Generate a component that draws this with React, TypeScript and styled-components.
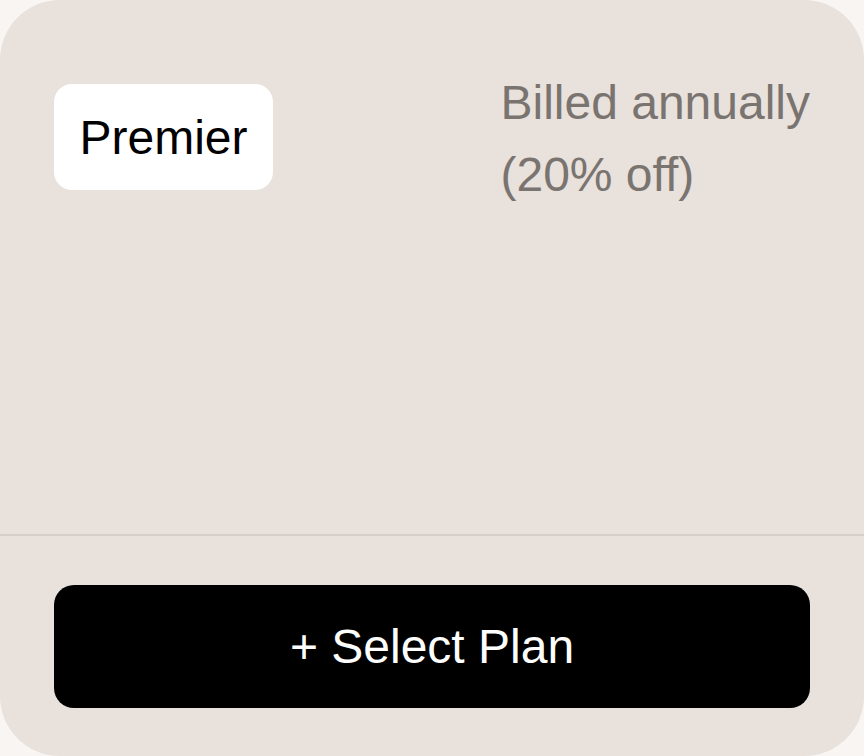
import React from 'react';
import styled, { createGlobalStyle } from 'styled-components';

const GlobalStyle = createGlobalStyle`
  html, body {
    margin: 0;
    padding: 0;
    background: #f8f5f2;
  }
  body {
    font-family: 'Liberation Sans', Arial, sans-serif;
  }
`;

const Card = styled.section`
  display: flex;
  flex-direction: column;
  width: 864px;
  height: 756px;
  box-sizing: border-box;
  background: #e8e1dc;
  border-radius: 60px;
  overflow: hidden;
`;

const Header = styled.header`
  flex: 1;
  display: flex;
  justify-content: space-between;
  align-items: flex-start;
  padding: 84px 54px 0;
`;

const PlanBadge = styled.div`
  display: flex;
  align-items: center;
  justify-content: center;
  width: 219px;
  height: 106px;
  background: #ffffff;
  border-radius: 18px;
  color: #000;
  font-size: 48px;
`;

const Billing = styled.div`
  margin-top: -17px;
  color: #7a7470;
  font-size: 48px;
  line-height: 72px;
`;

const Footer = styled.footer`
  border-top: 2px solid #d6cfca;
  padding: 49px 54px 48px;
`;

const SelectButton = styled.button`
  display: flex;
  align-items: center;
  justify-content: center;
  width: 100%;
  height: 123px;
  border: none;
  border-radius: 20px;
  background: #000;
  color: #fff;
  font-family: 'Liberation Sans', Arial, sans-serif;
  font-size: 48px;
  cursor: pointer;
`;

export default function App() {
  return (
    <>
      <GlobalStyle />
      <Card>
        <Header>
          <PlanBadge>Premier</PlanBadge>
          <Billing>
            Billed annually
            <br />
            (20% off)
          </Billing>
        </Header>
        <Footer>
          <SelectButton>+ Select Plan</SelectButton>
        </Footer>
      </Card>
    </>
  );
}
